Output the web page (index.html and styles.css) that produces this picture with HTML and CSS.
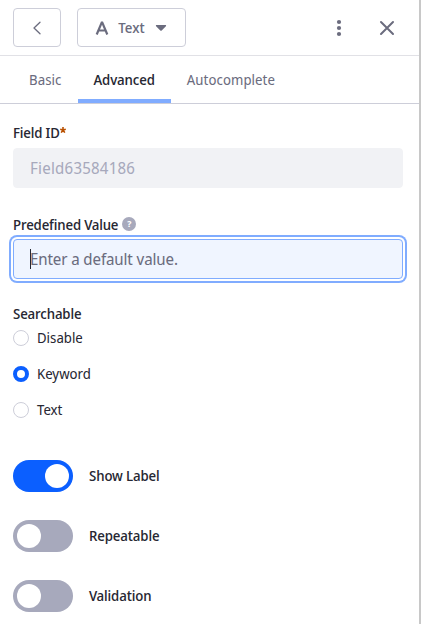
FILE: index.html
```html
<!DOCTYPE html>
<html lang="en">
<head>
<meta charset="utf-8">
<title>Field settings</title>
<link rel="stylesheet" href="styles.css">
</head>
<body>
<aside class="sidebar">
  <header class="header">
    <button class="btn btn-back" aria-label="Back">
      <svg width="16" height="16" viewBox="0 0 16 16"><path d="M11 2.200 5 8l6 5.800" fill="none" stroke="currentColor" stroke-width="1.300" stroke-linecap="round" stroke-linejoin="round"/></svg>
    </button>
    <button class="btn btn-type">
      <svg class="type-icon" width="14" height="16" viewBox="0 0 14 16"><path d="M1.700 14.500 7 1.800l5.300 12.700M3.600 10.500h6.800" fill="none" stroke="currentColor" stroke-width="2.200" stroke-linejoin="bevel"/></svg>
      <span class="type-name">Text</span>
      <svg width="12" height="8" viewBox="0 0 12 8"><path d="M1.600 1h8.800c.7 0 1 .7.5 1.200L6.700 6.500a1 1 0 0 1-1.400 0L1.100 2.200C.6 1.700.9 1 1.600 1z" fill="currentColor"/></svg>
    </button>
    <div class="actions">
      <svg width="16" height="18" viewBox="0 0 16 18"><g fill="currentColor"><circle cx="8" cy="3" r="2.100"/><circle cx="8" cy="9" r="2.100"/><circle cx="8" cy="15" r="2.100"/></g></svg>
      <svg width="16" height="16" viewBox="0 0 16 16"><path d="M2 2l12 12M14 2 2 14" stroke="currentColor" stroke-width="2" stroke-linecap="round"/></svg>
    </div>
  </header>
  <nav class="tabs">
    <a class="tab">Basic</a>
    <a class="tab active">Advanced</a>
    <a class="tab">Autocomplete</a>
  </nav>
  <main class="form">
    <div class="group">
      <label class="label">Field ID<svg class="required" width="6" height="6" viewBox="0 0 6 6"><path d="M3 0v3M.2 2.200 3 3l2.800-.8M3 3 1.200 5.600M3 3l1.800 2.600" fill="none" stroke="currentColor" stroke-width="1.600"/></svg></label>
      <div class="input disabled">Field63584186</div>
    </div>
    <div class="group">
      <label class="label">Predefined Value<span class="help">?</span></label>
      <div class="input focused"><i class="caret"></i>Enter a default value.</div>
    </div>
    <div class="radios">
      <div class="label">Searchable</div>
      <label class="radio"><i class="dot"></i><span>Disable</span></label>
      <label class="radio"><i class="dot checked"></i><span>Keyword</span></label>
      <label class="radio"><i class="dot"></i><span>Text</span></label>
    </div>
    <div class="switches">
      <label class="switch"><i class="track on"></i><span>Show Label</span></label>
      <label class="switch"><i class="track"></i><span>Repeatable</span></label>
      <label class="switch"><i class="track"></i><span>Validation</span></label>
    </div>
  </main>
</aside>
</body>
</html>
```
FILE: styles.css
```css
* { box-sizing: border-box; }
body {
  margin: 0;
  font: 14px/21px "Noto Sans Display", "Noto Sans", sans-serif;
  color: #272833;
  background: #fff;
  overflow: hidden;
}
svg { display: block; flex: none; }
.sidebar {
  height: 624px;
  border-right: 2px solid #c8c8c8;
  overflow: hidden;
}
.header {
  display: flex;
  align-items: center;
  height: 56px;
  padding: 0 24px 0 13px;
  border-bottom: 1px solid #e1e1e6;
  color: #6b6c7e;
}
.btn {
  display: flex;
  align-items: center;
  justify-content: center;
  height: 39px;
  padding: 0;
  border: 1px solid #cdced9;
  border-radius: 4px;
  background: #fff;
  color: inherit;
  font: inherit;
}
.btn-back { width: 48px; }
.btn-type {
  justify-content: flex-start;
  width: 109px;
  margin-left: 16px;
  padding-left: 17px;
}
.type-name { width: 27px; margin: 0 10px 0 9px; font-weight: 550; }
.actions {
  display: flex;
  align-items: center;
  gap: 32px;
  margin-left: auto;
}
.tabs {
  display: flex;
  height: 48px;
  padding-left: 13px;
  border-bottom: 1px solid #cdced9;
}
.tab {
  padding: 13px 16px 0;
  height: 47px;
  letter-spacing: .07px;
  color: #6b6c7e;
}
.tab.active {
  color: #272833;
  letter-spacing: -.12px;
  font-weight: 500;
  border-bottom: 4px solid #80acff;
}
.form { padding: 18px 16px 0 13px; }
.group { height: 91px; }
.group:first-child { height: 92px; }
.label {
  display: flex;
  align-items: center;
  height: 20px;
  font-weight: 550;
  letter-spacing: -.15px;
}
.required { align-self: flex-start; margin-top: 5px; color: #b95000; }
.help {
  width: 14px;
  height: 14px;
  margin-left: 4px;
  border-radius: 50%;
  background: #a7a9bc;
  color: #fff;
  font-size: 9px;
  font-weight: 700;
  line-height: 14px;
  text-align: center;
}
.input {
  position: relative;
  height: 40px;
  margin-top: 6px;
  padding: 0 16px;
  border: 1px solid #f1f2f5;
  border-radius: 4px;
  background: #f1f2f5;
  color: #a7a9bc;
  font-size: 16px;
  line-height: 38px;
  letter-spacing: .22px;
}
.input.focused {
  margin-top: 5px;
  letter-spacing: -.12px;
  border-color: #80acff;
  background: #f0f5ff;
  color: #6b6c7e;
  box-shadow: 0 0 0 2px #fff, 0 0 0 4px #80acff;
}
.caret {
  position: absolute;
  left: 16px;
  top: 9px;
  width: 1px;
  height: 20px;
  background: #272833;
}
.radios { margin-top: -2px; }
.radio {
  display: flex;
  align-items: center;
  height: 24px;
  margin-bottom: 12px;
}
.radio span,
.switch span { padding-bottom: 2px; }
.radios .label { height: 23px; padding-bottom: 2px; }
.dot {
  width: 16px;
  height: 16px;
  margin-right: 8px;
  border: 1px solid #cdced9;
  border-radius: 50%;
}
.dot.checked { border: 4.500px solid #0b5fff; }
.switches { margin-top: 30px; }
.switch {
  display: flex;
  align-items: center;
  height: 48px;
  margin-bottom: 12px;
  font-weight: 550;
  letter-spacing: -.12px;
}
.track {
  display: flex;
  width: 60px;
  height: 32px;
  margin-right: 16px;
  padding: 4px;
  border-radius: 16px;
  background: #a7a9bc;
}
.track::before {
  content: "";
  width: 24px;
  height: 24px;
  border-radius: 50%;
  background: #fff;
}
.track.on { justify-content: flex-end; background: #0b5fff; }
```
